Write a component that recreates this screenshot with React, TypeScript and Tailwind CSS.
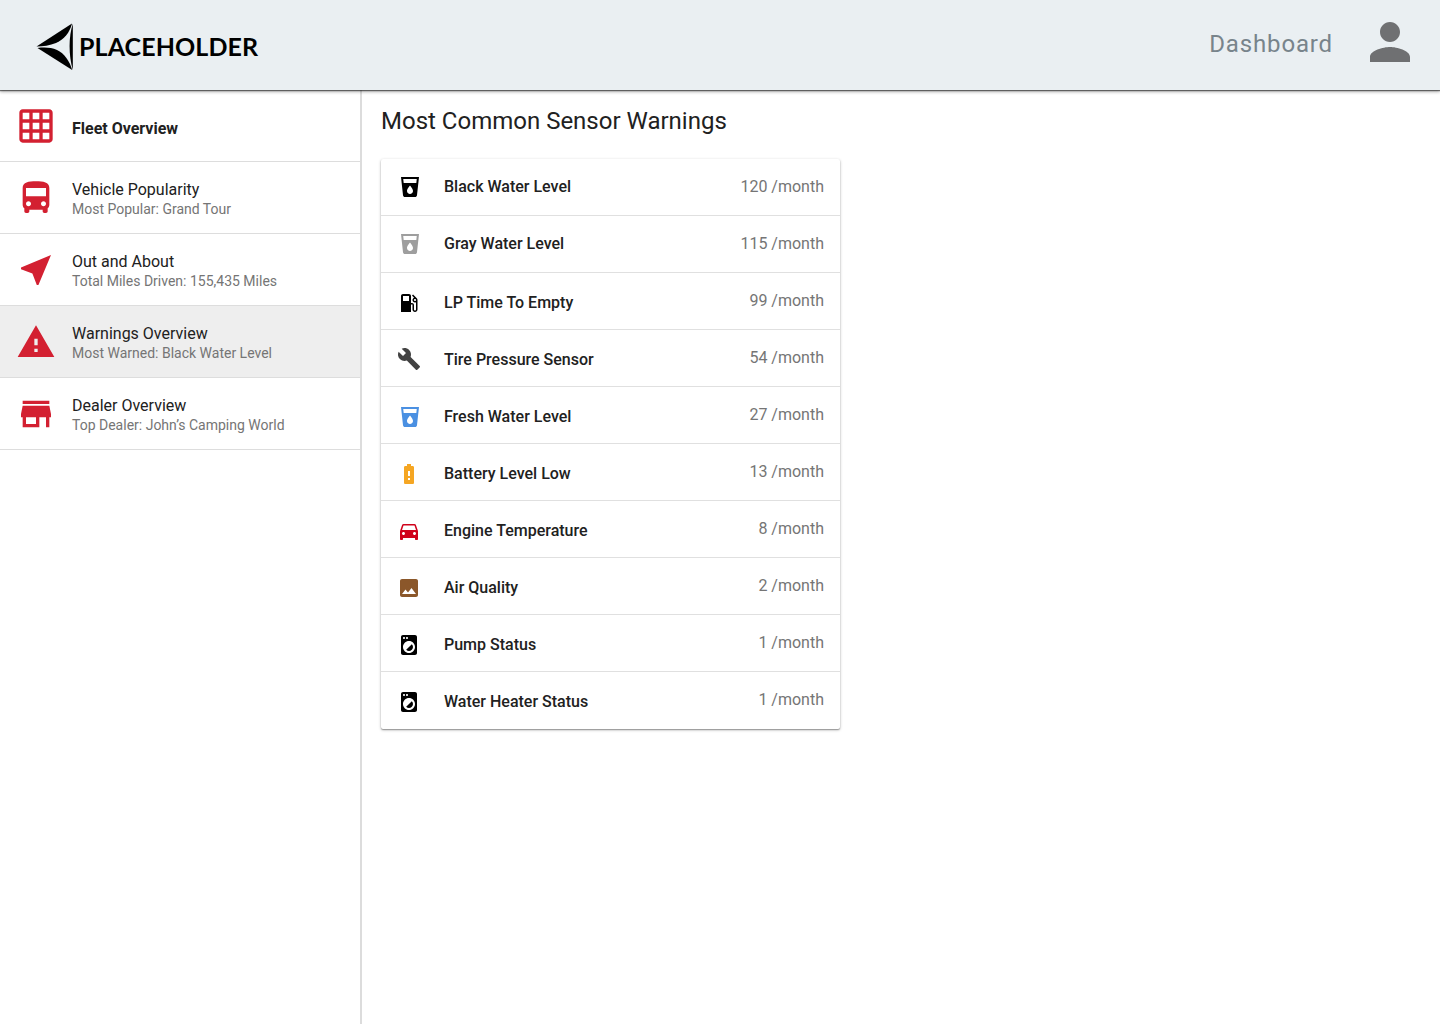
import React from "react";

const icons = {
  drink: "M3 2l2.01 18.23C5.13 21.23 5.97 22 7 22h10c1.03 0 1.87-.77 1.99-1.77L21 2H3zm9 17c-1.66 0-3-1.34-3-3 0-2 3-5.4 3-5.4s3 3.4 3 5.4c0 1.66-1.34 3-3 3zm6.33-11H5.67l-.44-4h13.53l-.43 4z",
  gas: "M19.77 7.23l.01-.01-3.72-3.72L15 4.56l2.11 2.11c-.94.36-1.61 1.26-1.61 2.33 0 1.38 1.12 2.5 2.5 2.5.36 0 .69-.08 1-.21v7.21c0 .55-.45 1-1 1s-1-.45-1-1V14c0-1.1-.9-2-2-2h-1V5c0-1.1-.9-2-2-2H6c-1.1 0-2 .9-2 2v16h10v-7.5h1.5v5c0 1.38 1.12 2.5 2.5 2.5s2.5-1.12 2.5-2.5V9c0-.69-.28-1.32-.73-1.77zM12 10H6V5h6v5zm6 0c-.55 0-1-.45-1-1s.45-1 1-1 1 .45 1 1-.45 1-1 1z",
  build: "M22.7 19l-9.1-9.1c.9-2.3.4-5-1.5-6.9-2-2-5-2.4-7.4-1.3L9 6 6 9 1.6 4.7C.4 7.1.9 10.1 2.9 12.1c1.9 1.9 4.6 2.4 6.9 1.5l9.1 9.1c.4.4 1 .4 1.4 0l2.3-2.3c.5-.4.5-1.1.1-1.4z",
  battery: "M15.67 4H14V2h-4v2H8.33C7.6 4 7 4.6 7 5.33v15.33C7 21.4 7.6 22 8.33 22h7.33c.74 0 1.34-.6 1.34-1.33V5.33C17 4.6 16.4 4 15.67 4zM13 18h-2v-2h2v2zm0-4h-2V9h2v5z",
  car: "M18.92 6.01C18.72 5.42 18.16 5 17.5 5h-11c-.66 0-1.21.42-1.42 1.01L3 12v8c0 .55.45 1 1 1h1c.55 0 1-.45 1-1v-1h12v1c0 .55.45 1 1 1h1c.55 0 1-.45 1-1v-8l-2.08-5.99zM6.5 16c-.83 0-1.5-.67-1.5-1.5S5.67 13 6.5 13s1.5.67 1.5 1.5S7.33 16 6.5 16zm11 0c-.83 0-1.5-.67-1.5-1.5s.67-1.5 1.5-1.5 1.5.67 1.5 1.5-.67 1.5-1.5 1.5zM5 11l1.5-4.5h11L19 11H5z",
  photo: "M21 19V5c0-1.1-.9-2-2-2H5c-1.1 0-2 .9-2 2v14c0 1.1.9 2 2 2h14c1.1 0 2-.9 2-2zM8.5 13.5l2.5 3.01L14.5 12l4.5 6H5l3.5-4.5z",
  laundry: "M9.17 16.83c1.56 1.56 4.1 1.56 5.66 0 1.56-1.56 1.56-4.1 0-5.66l-5.66 5.66zM18 2.01L6 2c-1.11 0-2 .89-2 2v16c0 1.11.89 2 2 2h12c1.11 0 2-.89 2-2V4c0-1.11-.89-1.99-2-1.99zM10 4c.55 0 1 .45 1 1s-.45 1-1 1-1-.45-1-1 .45-1 1-1zM7 4c.55 0 1 .45 1 1s-.45 1-1 1-1-.45-1-1 .45-1 1-1zm5 16c-3.31 0-6-2.69-6-6s2.69-6 6-6 6 2.69 6 6-2.69 6-6 6z",
  grid: "M20 2H4c-1.1 0-2 .9-2 2v16c0 1.1.9 2 2 2h16c1.1 0 2-.9 2-2V4c0-1.1-.9-2-2-2zM8 20H4v-4h4v4zm0-6H4v-4h4v4zm0-6H4V4h4v4zm6 12h-4v-4h4v4zm0-6h-4v-4h4v4zm0-6h-4V4h4v4zm6 12h-4v-4h4v4zm0-6h-4v-4h4v4zm0-6h-4V4h4v4z",
  bus: "M4 16c0 .88.39 1.67 1 2.22V20c0 .55.45 1 1 1h1c.55 0 1-.45 1-1v-1h8v1c0 .55.45 1 1 1h1c.55 0 1-.45 1-1v-1.78c.61-.55 1-1.34 1-2.22V6c0-3.5-3.58-4-8-4s-8 .5-8 4v10zm3.5 1c-.83 0-1.5-.67-1.5-1.5S6.67 14 7.5 14s1.5.67 1.5 1.5S8.33 17 7.5 17zm9 0c-.83 0-1.5-.67-1.5-1.5s.67-1.5 1.5-1.5 1.5.67 1.5 1.5-.67 1.5-1.5 1.5zm1.5-6H6V6h12v5z",
  nearMe: "M21 3L3 10.53v.98l6.84 2.65L12.48 21h.98L21 3z",
  warning: "M1 21h22L12 2 1 21zm12-3h-2v-2h2v2zm0-4h-2v-4h2v4z",
  store: "M20 4H4v2h16V4zm1 10v-2l-1-5H4l-1 5v2h1v6h10v-6h4v6h2v-6h1zm-9 4H6v-4h6v4z",
  person: "M12 12c2.21 0 4-1.79 4-4s-1.79-4-4-4-4 1.79-4 4 1.79 4 4 4zm0 2c-2.67 0-8 1.34-8 4v2h16v-2c0-2.66-5.33-4-8-4z",
};

const Icon = ({ d, className }: { d: string; className: string }) => (
  <svg viewBox="0 0 24 24" fill="currentColor" className={className}>
    <path d={d} />
  </svg>
);

const navItems = [
  { icon: icons.grid, title: "Fleet Overview", bold: true },
  { icon: icons.bus, title: "Vehicle Popularity", sub: "Most Popular: Grand Tour" },
  { icon: icons.nearMe, title: "Out and About", sub: "Total Miles Driven: 155,435 Miles" },
  { icon: icons.warning, title: "Warnings Overview", sub: "Most Warned: Black Water Level", active: true },
  { icon: icons.store, title: "Dealer Overview", sub: "Top Dealer: John’s Camping World" },
];

// the rows below the second sit a pixel or two low in the card, same for their icons
const warnings = [
  { icon: icons.drink, color: "text-black ml-px", label: "Black Water Level", count: "120" },
  { icon: icons.drink, color: "text-[#9e9e9e] ml-px", label: "Gray Water Level", count: "115" },
  { icon: icons.gas, color: "text-black mt-1", label: "LP Time To Empty", count: "99", low: true },
  { icon: icons.build, color: "text-[#424242] mt-px", label: "Tire Pressure Sensor", count: "54", low: true },
  { icon: icons.drink, color: "text-[#4a90e2] ml-px mt-[3px]", label: "Fresh Water Level", count: "27", low: true },
  { icon: icons.battery, color: "text-[#f5a623] mt-1", label: "Battery Level Low", count: "13", low: true },
  { icon: icons.car, color: "text-[#d0021b] mt-1", label: "Engine Temperature", count: "8", low: true },
  { icon: icons.photo, color: "text-[#8b572a] mt-1", label: "Air Quality", count: "2", low: true },
  { icon: icons.laundry, color: "text-black mt-1", label: "Pump Status", count: "1", low: true },
  { icon: icons.laundry, color: "text-black mt-1", label: "Water Heater Status", count: "1", low: true },
];

const Logo = () => (
  <div className="flex items-center mt-[3px]">
    <svg viewBox="0 0 40 48" className="w-[40px] h-[48px] text-black" fill="currentColor">
      <path d="M0.5 23.5 L36 0.5 C33.5 10 28 16.5 20 20 C14 22.5 7 23.5 0.5 23.5 Z" />
      <path d="M1.5 25 C9 24 15 24.5 21 27 C28.5 30.5 33.5 38 36.2 47 Z" />
      <path d="M36.8 0.8 C32.5 14 32.5 32 36.8 47 Z" />
    </svg>
    <span className="ml-[3px] font-['Lato',sans-serif] font-bold text-[25px] tracking-[0.1px] leading-none text-black">PLACEHOLDER</span>
  </div>
);

export default function App() {
  return (
    <div className="h-[1024px] flex flex-col bg-white font-['Roboto',sans-serif] overflow-hidden">
      <header className="h-[90px] shrink-0 bg-[#eaeff2] flex items-center justify-between pl-[36px] pr-5 relative z-10 shadow-[0_1px_1px_rgba(0,0,0,0.5),0_2px_3px_rgba(0,0,0,0.3)]">
        <Logo />
        <div className="flex items-center">
          <span className="text-[24px] tracking-[0.85px] text-[#78848b] mr-[27px] -mt-[2px]">Dashboard</span>
          <Icon d={icons.person} className="w-[60px] h-[60px] text-[#6f7072] -mt-[6px]" />
        </div>
      </header>
      <div className="flex flex-1 min-h-0">
        <aside className="w-[362px] shrink-0 border-r-2 border-[#dcdcdc] pt-px">
          {navItems.map((item) => (
            <div
              key={item.title}
              className={`h-[72px] first:h-[71px] flex items-center px-4 border-b border-[#dddddd] ${item.active ? "bg-[#eeeeee]" : ""}`}
            >
              <Icon d={item.icon} className="w-10 h-10 text-[#d32031] shrink-0" />
              <div className={`ml-4 ${item.bold ? "pt-[6px]" : "pt-[3px]"}`}>
                <div className={`text-[16px] leading-[20px] text-[#212121] ${item.bold ? "font-bold" : ""}`}>{item.title}</div>
                {item.sub && <div className="text-[14px] leading-[19px] text-[#757575]">{item.sub}</div>}
              </div>
            </div>
          ))}
        </aside>
        <main className="flex-1 pl-[19px]">
          <h1 className="text-[24px] leading-[32px] text-[#212121] mt-[15px] mb-[22px]">Most Common Sensor Warnings</h1>
          <div className="w-[459px] rounded-[2px] bg-white shadow-[0_1px_3px_rgba(0,0,0,0.3),0_1px_1px_rgba(0,0,0,0.25)]">
            {warnings.map((w) => (
              <div key={w.label} className="h-[57px] flex items-center justify-between px-4 border-b border-[#e0e0e0] last:border-transparent">
                <div className="flex items-center">
                  <Icon d={w.icon} className={`w-6 h-6 ${w.color}`} />
                  <span className={`text-[16px] font-medium text-[#212121] ${w.color.includes("ml-px") ? "ml-[22px]" : "ml-[23px]"} ${w.low ? "mt-1" : ""}`}>{w.label}</span>
                </div>
                <span className="text-[16px] text-[#757575]">{w.count} /month</span>
              </div>
            ))}
          </div>
        </main>
      </div>
    </div>
  );
}
